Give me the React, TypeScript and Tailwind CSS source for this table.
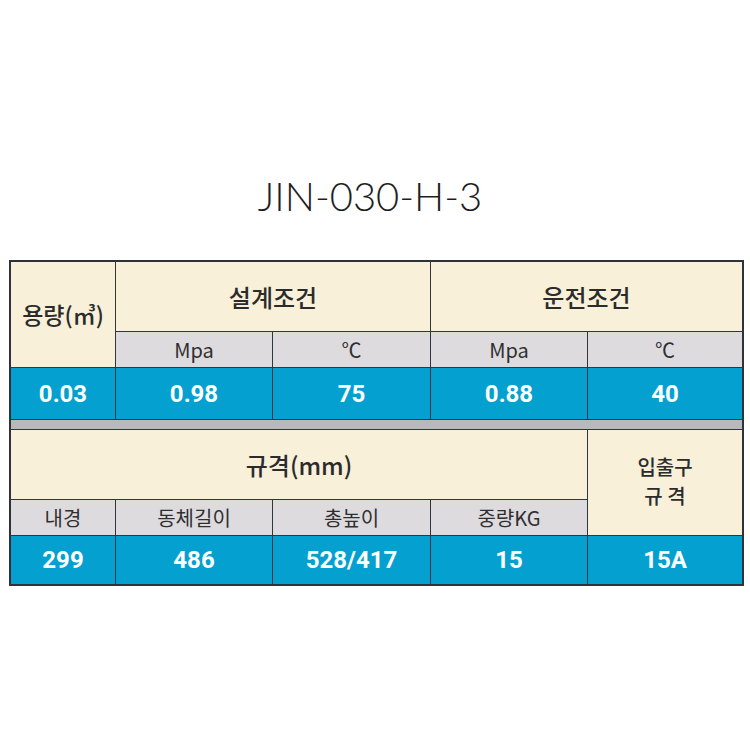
import React from "react";

const kr = "font-['Noto_Sans_CJK_KR','Noto_Sans',sans-serif]";
const num = "font-['Roboto','Noto_Sans',sans-serif]";

const cream = "bg-[#f8f0d9] text-[#2b2b2b] flex items-center justify-center";
const sub = "bg-[#dedbdf] text-[#2f2f2f] flex items-center justify-center text-[20px]";
const blue = "bg-[#04a1d0] text-white flex items-center justify-center font-bold text-[24px]";

export default function App() {
  const topValues = ["0.03", "0.98", "75", "0.88", "40"];
  const bottomLabels = ["내경", "동체길이", "총높이", "중량KG"];
  const bottomValues = ["299", "486", "528/417", "15", "15A"];

  return (
    <div className="w-[750px] h-[750px] bg-white">
      <h1 className="pt-[172px] pr-[10px] text-center text-[40px] leading-[48px] font-light text-[#1e1e1e] font-['Lato','Noto_Sans',sans-serif]">
        JIN-030-H-3
      </h1>

      <div
        className={`ml-[9px] mt-[40px] w-[735px] border-2 border-[#2f3238] bg-[#2f3640] grid gap-px grid-cols-[104px_156px_157px_156px_154px] grid-rows-[69px_35px_51px_9px_69px_35px_48px] ${kr}`}
      >
        {/* 상단 헤더 */}
        <div className={`${cream} row-span-2 text-[23px] font-medium`}>
          용량(㎥)
        </div>
        <div className={`${cream} col-span-2 text-[24px] font-medium`}>설계조건</div>
        <div className={`${cream} col-span-2 text-[24px] font-medium`}>운전조건</div>

        <div className={sub}>Mpa</div>
        <div className={sub}>℃</div>
        <div className={sub}>Mpa</div>
        <div className={sub}>℃</div>

        {topValues.map((v) => (
          <div key={v} className={`${blue} ${num}`}>
            {v}
          </div>
        ))}

        {/* 구분선 */}
        <div className="col-span-5 bg-[#b9b9b9]" />

        {/* 하단 규격 */}
        <div className={`${cream} col-span-4 text-[24px] font-medium`}>규격(mm)</div>
        <div className={`${cream} row-span-2 flex-col text-[20px] font-medium leading-[29px] pb-[4px]`}>
          <span>입출구</span>
          <span>규 격</span>
        </div>

        {bottomLabels.map((l) => (
          <div key={l} className={sub}>
            {l}
          </div>
        ))}

        {bottomValues.map((v) => (
          <div key={v} className={`${blue} ${num}`}>
            {v}
          </div>
        ))}
      </div>
    </div>
  );
}
